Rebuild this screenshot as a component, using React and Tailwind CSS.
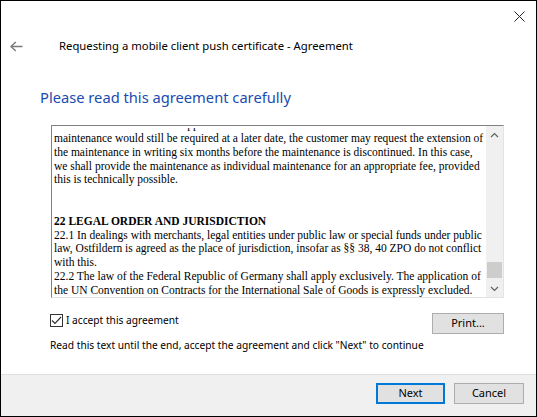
import React from "react";

const LINES = [
  { text: "maintenance would still be required at a later date, the customer may request the extension of" },
  { text: "the maintenance in writing six months before the maintenance is discontinued. In this case," },
  { text: "we shall provide the maintenance as individual maintenance for an appropriate fee, provided" },
  { text: "this is technically possible." },
  { text: "" },
  { text: "" },
  { text: "22 LEGAL ORDER AND JURISDICTION", bold: true },
  { text: "22.1 In dealings with merchants, legal entities under public law or special funds under public" },
  { text: "law, Ostfildern is agreed as the place of jurisdiction, insofar as §§ 38, 40 ZPO do not conflict" },
  { text: "with this." },
  { text: "22.2 The law of the Federal Republic of Germany shall apply exclusively. The application of" },
  { text: "the UN Convention on Contracts for the International Sale of Goods is expressly excluded." },
];

function Chevron({ up }) {
  return (
    <svg width="9" height="6" viewBox="0 0 9 6" fill="none" stroke="#606060" strokeWidth="1.2">
      {up ? <polyline points="1,5 4.5,1.5 8,5" /> : <polyline points="1,1 4.5,4.5 8,1" />}
    </svg>
  );
}

function AgreementBox() {
  return (
    <div className="ml-[50px] mt-[17px] flex h-[173px] w-[453px] border border-t-[#828282] border-l-[#828282] border-r-[#e3e3e3] border-b-[#e3e3e3]">
      <div className="flex-1 overflow-hidden pl-[2px] pt-[2px] font-['Liberation_Serif',serif] text-[11.5px] leading-[13.8px] text-black">
        {/* tail of the previous line, scrolled almost out of view */}
        <div className="flex h-[4px] flex-col justify-end overflow-hidden">
          <div className="h-[13.8px] shrink-0 whitespace-nowrap">
            maintenance has ended. If support is attached to the relevant release and
          </div>
        </div>
        {LINES.map((line, i) => (
          <div key={i} className={line.bold ? "h-[13.8px] whitespace-nowrap font-bold" : "h-[13.8px] whitespace-nowrap"}>
            {line.text}
          </div>
        ))}
      </div>
      <div className="flex w-[17px] flex-col bg-[#f0f0f0]">
        <div className="flex h-[17px] items-center justify-center">
          <Chevron up />
        </div>
        <div className="flex flex-1 flex-col justify-end">
          <div className="mx-[1px] mb-[2px] h-[16px] bg-[#cdcdcd]" />
        </div>
        <div className="flex h-[17px] items-center justify-center">
          <Chevron />
        </div>
      </div>
    </div>
  );
}

function Button({ children, primary, className }) {
  return (
    <div
      className={
        (primary ? "border-2 border-[#0078d7] " : "border border-[#adadad] ") +
        "flex h-[21px] items-center justify-center bg-[#e1e1e1] text-[11px] text-black " +
        className
      }
    >
      {children}
    </div>
  );
}

export default function App() {
  return (
    <div className="flex h-[417px] w-[537px] flex-col border border-black bg-white font-['Noto_Sans',sans-serif] text-[10.2px] text-black">
      <div className="flex h-[31px] justify-end pr-[11px] pt-[10px]">
        <svg width="11" height="11" viewBox="0 0 11 11" stroke="#222" strokeWidth="1">
          <line x1="0.5" y1="0.5" x2="10.5" y2="10.5" />
          <line x1="10.5" y1="0.5" x2="0.5" y2="10.5" />
        </svg>
      </div>

      <div className="flex h-[28px] items-center pl-[9px]">
        <svg width="13" height="11" viewBox="0 0 13 11" fill="none" stroke="#7a7a7a" strokeWidth="1.5">
          <line x1="1" y1="5.5" x2="12.5" y2="5.5" />
          <polyline points="5.8,1 1,5.5 5.8,10" />
        </svg>
        <span className="ml-[36px] text-[11.3px]">Requesting a mobile client push certificate - Agreement</span>
      </div>

      <div className="ml-[39px] mt-[26px] h-[22px] text-[14.7px] leading-[22px] text-[#1a4cb0]">
        Please read this agreement carefully
      </div>

      <AgreementBox />

      <div className="ml-[49px] mr-[32px] mt-[15px] flex h-[21px] items-start justify-between">
        <div className="flex items-center">
          <div className="flex h-[13px] w-[13px] items-center justify-center border border-[#333] bg-white">
            <svg width="11" height="9" viewBox="0 0 11 9" fill="none" stroke="#333" strokeWidth="1.2">
              <polyline points="1,4.5 4,7.5 10,1" />
            </svg>
          </div>
          <span className="ml-[3px] leading-[14px]">I accept this agreement</span>
        </div>
        <Button className="w-[72px]">Print...</Button>
      </div>

      <div className="ml-[49px] mt-[3px] leading-[16px]">
        Read this text until the end, accept the agreement and click "Next" to continue
      </div>

      <div className="flex-1" />

      <div className="flex h-[42px] justify-end gap-[9px] border-t border-[#dfdfdf] bg-[#f0f0f0] pr-[12px] pt-[8px]">
        <Button primary className="w-[69px]">Next</Button>
        <Button className="w-[70px]">Cancel</Button>
      </div>
    </div>
  );
}
